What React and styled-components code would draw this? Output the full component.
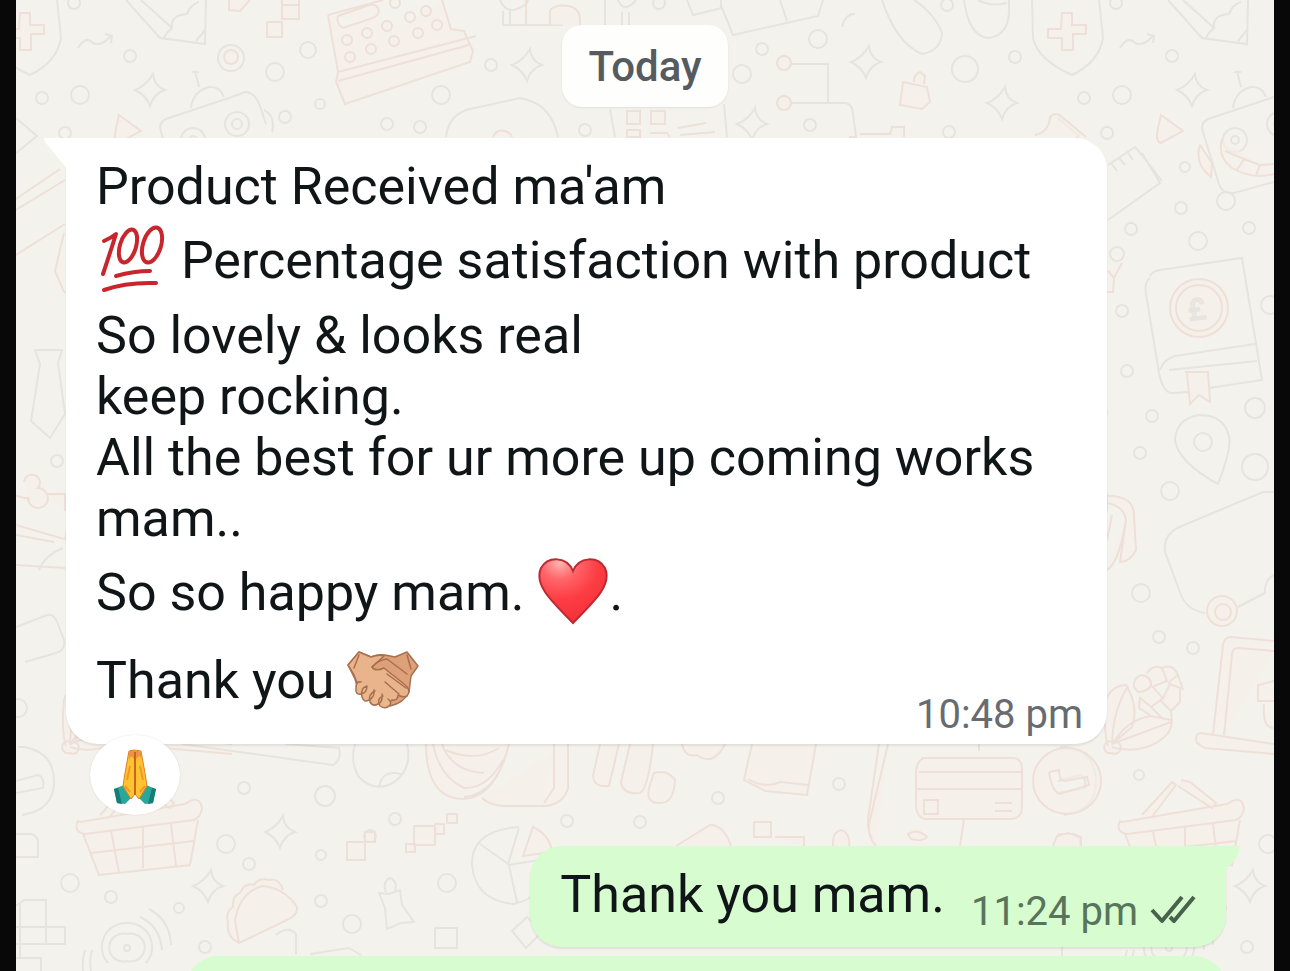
import React from 'react'
import styled, { createGlobalStyle } from 'styled-components'

function App() {
  return (
    <>
      <GlobalStyle />
      <Screen>
        <Wallpaper />
        <Chat>
          <DayChip>Today</DayChip>
          <Incoming>
            <IncomingTail viewBox="0 0 24 32" aria-hidden="true">
              <path d="M0 0H24V32L2 5Q0 2 0 0Z" fill="#fff" />
            </IncomingTail>
            <Line>Product Received ma'am</Line>
            <Line $tall><Hundred /> Percentage satisfaction with product</Line>
            <Line>So lovely &amp; looks real</Line>
            <Line>keep rocking.</Line>
            <Line>All the best for ur more up coming works mam..</Line>
            <Line $tall>So so happy mam. <Heart />.</Line>
            <LastRow>
              <Line $tall>Thank you <Handshake /></Line>
              <Time>10:48 pm</Time>
            </LastRow>
            <Reaction aria-label="Folded hands reaction"><Pray /></Reaction>
          </Incoming>
          <Outgoing>
            <OutgoingTail viewBox="0 0 24 32" aria-hidden="true">
              <path d="M24 0H0V32Q10 32 11 22Q23 12 24 0Z" fill="#d7fccf" />
            </OutgoingTail>
            <Line>Thank you mam.</Line>
            <Meta>
              <Time $sent>11:24 pm</Time>
              <Ticks />
            </Meta>
          </Outgoing>
          <NextMessage />
        </Chat>
      </Screen>
    </>
  )
}

function Hundred() {
  return (
    <Emoji viewBox="0 0 72 72" role="img" aria-label="100">
      <g fill="none" stroke="#c9252d" strokeWidth="4" strokeLinecap="round" strokeLinejoin="round">
        <path d="M8 18Q15 15 20 11Q14 30 7 51" />
        <ellipse cx="32" cy="23" rx="8" ry="17" transform="rotate(17 32 23)" />
        <ellipse cx="56" cy="22" rx="9" ry="18" transform="rotate(17 56 22)" />
        <path d="M20 53Q38 48 54 48" />
        <path d="M8 67Q30 59 60 60" />
      </g>
    </Emoji>
  )
}

function Heart() {
  return (
    <Emoji viewBox="0 0 72 72" role="img" aria-label="Red heart">
      <defs>
        <radialGradient id="heart" cx="30%" cy="5%" r="90%">
          <stop offset="0" stopColor="#ffb6b2" />
          <stop offset="0.3" stopColor="#ff656a" />
          <stop offset="0.65" stopColor="#fc3d43" />
          <stop offset="1" stopColor="#f5323a" />
        </radialGradient>
      </defs>
      <path
        d="M36 16C30 1 11 1 4 13C-3 29 12 44 36 68C60 44 75 29 68 13C61 1 42 1 36 16Z"
        fill="url(#heart)"
        stroke="#bb2932"
        strokeWidth="2"
      />
    </Emoji>
  )
}

function Handshake() {
  return (
    <Emoji viewBox="0 0 72 72" role="img" aria-label="Handshake">
      <g stroke="#a8704f" strokeWidth="1.5" strokeLinejoin="round" strokeLinecap="round">
        <path fill="#dea078" d="M1 22L12 9L24 14Q31 11 38 12L48 14L60 9L71 23L64 33L62 49Q57 60 43 63L30 61L12 50L8 36Z" />
        <path fill="#e9b38b" d="M1 22L12 9L24 14Q32 11 37 13L25 24Q28 29 37 25L57 41Q65 47 60 53Q56 55 51 52Q51 58 45 57Q42 61 37 56L12 45L7 32Z" />
        <path fill="#ebb78d" d="M14 39Q9 38 9 45Q8 52 14 51Q20 50 20 43M20 43Q13 45 15 54Q17 60 22 57Q28 54 27 47M28 48Q21 51 23 59Q26 64 31 61Q36 59 35 51M36 53Q29 56 33 63Q39 67 43 62Q45 59 41 56" />
        <path fill="none" d="M25 24Q31 17 40 16L60 31M40 31L59 45M38 39L52 51M12 12L7 25M60 12L64 26" />
      </g>
    </Emoji>
  )
}

function Pray() {
  return (
    <PrayIcon viewBox="0 0 44 56" role="img" aria-label="Folded hands">
      <path fill="#2ba79a" d="M1 40L11 36L19 48L12 55L4 54ZM43 40L33 36L25 48L32 55L40 54Z" />
      <path fill="#147d77" d="M1 40L5 39L9 55L4 54ZM43 40L39 39L35 55L40 54Z" />
      <path fill="#ffc331" stroke="#dc8124" strokeWidth="1" d="M21 1L16 2L12 24L10 37L18 50L22 45L26 50L34 37L32 24L28 2Z" />
      <path fill="#ee9342" d="M16 2H28V9L26 7L22 11L18 7L16 11Z" />
      <path fill="none" stroke="#c76620" strokeWidth="2" d="M22 3V46" />
      <path fill="none" stroke="#f09a23" strokeWidth="2" d="M17 43L12 37M27 43L32 37M17 17L14 31M27 17L30 31" />
    </PrayIcon>
  )
}

function Ticks() {
  return (
    <TickIcon viewBox="0 0 46 30" role="img" aria-label="Delivered">
      <path d="M2 15L12 26L32 2M20 22L24 26L44 2" fill="none" stroke="#48624b" strokeWidth="4" strokeLinejoin="round" />
    </TickIcon>
  )
}

const dots = [
  [1172, 56, 6], [1084, 98, 6], [1122, 95, 9], [1107, 133, 6], [1185, 167, 5],
  [1181, 208, 6], [1131, 229, 6], [1198, 241, 9], [1249, 228, 6], [1122, 311, 6],
  [1270, 305, 9], [1127, 371, 6], [1255, 408, 10], [1152, 416, 6], [1140, 453, 6],
  [1255, 467, 13], [1170, 491, 9], [1141, 593, 9], [1159, 637, 6], [1193, 648, 6],
  [1139, 775, 5], [1268, 844, 9], [1247, 947, 6], [1112, 883, 9], [1153, 897, 6],
  [1221, 908, 5], [1060, 708, 9], [1099, 461, 6], [1116, 3, 6]
]

const midDots = [
  [308, 50, 8], [275, 72, 9], [320, 104, 5], [387, 124, 6], [420, 127, 6],
  [285, 117, 6], [491, 65, 6], [441, 95, 9], [742, 74, 9], [585, 130, 6],
  [762, 49, 6], [818, 39, 9], [659, 3, 6], [810, 125, 6], [947, 5, 6],
  [965, 69, 13], [1015, 57, 6], [949, 132, 6], [244, 788, 6], [325, 796, 10],
  [395, 819, 6], [249, 864, 6], [321, 855, 5], [321, 901, 6], [352, 924, 9],
  [447, 883, 9], [567, 821, 6], [640, 822, 6], [718, 798, 6], [839, 784, 6],
  [370, 836, 6]
]

const sparkles = [[1192, 90], [1250, 886]]
const midSparkles = [[527, 65], [752, 124], [866, 62], [280, 832], [1002, 103]]

const registerKeys = [
  [347, 40], [367, 33], [387, 26], [410, 17], [350, 57], [371, 49],
  [394, 41], [418, 33], [395, 3], [426, 11], [437, 25]
]

function Sparkle({ x, y }) {
  return <path d={`M${x + 3} ${y - 16}Q${x + 4} ${y - 4} ${x + 15} ${y}Q${x + 4} ${y + 3} ${x} ${y + 16}Q${x - 4} ${y + 5} ${x - 15} ${y}Q${x - 4} ${y - 4} ${x + 3} ${y - 16}Z`} />
}

// drawings that come back once per pattern tile
function TileDoodles() {
  return (
    <>
      {dots.map(([x, y, r]) => <circle key={`${x}-${y}`} cx={x} cy={y} r={r} />)}
      {sparkles.map(([x, y]) => <Sparkle key={x} x={x} y={y} />)}
      <path d="M1032 0L1033 38Q1038 60 1072 75Q1099 62 1103 38L1099 0" />
      <Warm d="M1062 13H1072V25H1086V34H1073V50H1062V38H1048V29H1061Z" />
      <path d="M1120 48Q1128 35 1135 43Q1143 47 1153 36M1147 34L1154 36L1153 43" />
      <path d="M1168 0L1202 38L1247 44L1248 0M1183 0L1214 28Q1207 34 1206 39M1214 28Q1212 15 1229 14Q1232 5 1241 2M1247 30L1238 41" />
      <Warm d="M1161 115L1183 131L1161 143Q1155 142 1158 128Z" />
      <path d="M1233 108Q1235 91 1251 87Q1262 86 1266 97M1241 87L1237 71M1234 72H1241M1274 97L1208 119Q1200 123 1203 132L1219 184Q1222 194 1234 193L1274 182" />
      <circle cx="1235" cy="140" r="12" /><circle cx="1235" cy="140" r="4" />
      <Warm d="M1222 139Q1217 157 1232 168Q1253 180 1274 174M1225 151L1244 159L1237 170M1244 159L1260 165L1256 175M1260 165L1274 164M1200 145Q1194 164 1211 177L1212 163Z" />
      <circle cx="1226" cy="201" r="9" />
      <path d="M1274 97L1287 92Q1297 92 1302 106L1308 124M1306 110Q1318 116 1314 132" />
      <circle cx="1279" cy="124" r="12" /><circle cx="1279" cy="124" r="5" />
      <path d="M1058 118L1079 136L1058 153M1162 181L1141 154L1135 147L1108 165M1142 153L1160 183L1108 220M1127 151L1133 160M1119 158L1125 165M1111 163L1117 171" />
      <Warm d="M1058 199L1102 169M1058 210L1107 180M1058 255L1107 224M1106 233L1097 271L1106 292" />
      <circle cx="1117" cy="254" r="7" /><Warm d="M1122 263L1114 278L1108 271M1114 278L1113 292H1106" />
      <path d="M1150 278Q1144 282 1146 294L1158 367Q1162 395 1174 393L1189 392M1150 276Q1153 271 1160 270L1242 258L1262 380L1209 388M1160 370Q1164 359 1175 356L1255 344M1169 370L1257 361" />
      <Warm d="M1185 372H1208L1210 402L1199 395L1190 404L1187 373" />
      <Warm d="M1199 279A29 29 0 1 0 1199 337A29 29 0 1 0 1199 279M1199 285A23 23 0 1 0 1199 331A23 23 0 1 0 1199 285" />
      <text x="1188" y="319" fontSize="29" transform="rotate(-8 1199 308)">£</text>
      <path d="M1218 484Q1178 462 1175 440Q1176 419 1199 415Q1224 415 1229 436Q1232 448 1218 484Z" /><circle cx="1203" cy="442" r="9" />
      <path d="M1274 492L1263 492L1177 528Q1163 536 1165 552L1181 595Q1187 610 1205 613M1238 607L1265 593M1265 593Q1264 580 1274 575" />
      <Warm d="M1222 596A15 15 0 1 0 1222 626A15 15 0 1 0 1222 596M1223 604A8 8 0 1 0 1223 620A8 8 0 1 0 1223 604" />
      <Warm d="M1107 496Q1134 495 1134 516L1136 550Q1130 562 1120 562L1126 520Q1124 506 1107 503M1107 570Q1119 563 1126 520M1107 540L1112 515" />
      <path d="M1077 350H1104L1100 363L1107 414L1092 438L1073 421L1082 364Z" />
      <Warm d="M1066 482A8 8 0 1 1 1080 488A10 10 0 1 1 1070 497M1058 496L1072 499M1088 494H1107V511M1058 525L1106 539M1058 535L1096 542M1058 565L1107 568" />
      <path d="M1058 627L1089 615Q1096 613 1100 624L1106 640Q1108 650 1098 653L1067 662M1081 570Q1087 555 1105 548" />
      <path d="M1060 747H1066Q1096 752 1096 782Q1096 810 1064 815M1058 781L1080 775Q1087 778 1085 788L1058 793M1058 834H1074Q1081 837 1080 845V857H1058" />
      <Warm d="M1108 746Q1103 730 1106 700Q1111 686 1126 685Q1139 706 1132 727L1112 744M1112 744Q1113 710 1128 686M1112 745Q1127 719 1151 716L1171 720Q1174 735 1150 746Q1130 753 1112 747M1112 744L1171 722M1113 742A6 6 0 1 0 1112 753A6 6 0 1 0 1113 742" />
      <Warm d="M1134 687Q1133 677 1142 675Q1152 677 1151 686Q1146 692 1138 692ZM1147 673Q1153 664 1162 668L1167 681L1154 686M1162 668Q1173 663 1178 675L1168 683M1152 686L1163 698L1151 707L1139 697M1163 698L1170 684L1180 688V702L1171 711L1160 700M1151 707L1163 719M1140 697L1139 708L1150 715M1178 675L1183 690M1171 711L1172 723" />
      <Warm d="M1274 641L1231 637Q1224 637 1223 645L1213 734M1274 651L1238 648Q1232 648 1232 655L1224 735M1274 744L1201 733Q1194 734 1197 743L1205 748L1274 754M1274 681L1258 685V701H1274M1264 704Q1262 727 1273 728" />
      <Warm d="M1122 822L1227 804Q1242 794 1244 808Q1243 817 1236 820L1127 834Q1115 832 1120 821ZM1142 815L1172 782L1176 785L1151 818M1181 780L1190 782L1216 803L1212 808L1178 786M1125 834L1141 875L1232 865L1240 820M1153 831L1161 873M1185 826V868M1213 824L1218 866M1133 853L1236 841" />
      <path d="M1058 906L1066 900H1088V927H1107V944H1058M1062 904V957M1058 927H1088V944M1058 958H1083V971" />
      <path d="M1125 971Q1124 960 1127 950M1133 971Q1131 960 1134 950M1169 923A24 24 0 0 0 1150 963M1169 923A24 24 0 0 1 1188 963M1169 934A14 14 0 1 0 1169 961A14 14 0 1 0 1169 934M1182 917Q1202 926 1204 950M1191 909Q1212 920 1213 945" />
      <circle cx="1169" cy="948" r="3" />
    </>
  )
}

function Wallpaper() {
  return (
    <Pattern viewBox="0 0 1258 971" preserveAspectRatio="xMidYMin slice" aria-hidden="true">
      <g transform="translate(-16 0)">
        <TileDoodles />
        <g transform="translate(-1042 0)"><TileDoodles /></g>
        {midDots.map(([x, y, r]) => <circle key={`${x}-${y}`} cx={x} cy={y} r={r} />)}
        {midSparkles.map(([x, y]) => <Sparkle key={x} x={x} y={y} />)}
        <circle cx="231" cy="58" r="13" /><Warm d="M224 57A7 7 0 1 0 238 57A7 7 0 1 0 224 57" />
        <Warm d="M229 0V10L240 11L250 0M282 0V19H299V0M267 22H282V37H267ZM282 5H299" />
        {/* cash register */}
        <Warm d="M328 15L383 0M328 15L338 72L476 36M338 81L469 45M338 72L336 82L345 104L470 62L473 51L464 31L451 29L442 0M338 16L369 5Q378 3 379 12Q377 17 370 19L343 28Q336 24 338 16Z" />
        {registerKeys.map(([x, y]) => <Key key={`${x}-${y}`} cx={x} cy={y} r="5" />)}
        <path d="M500 0Q505 11 514 10Q527 6 528 0M503 11V25M510 11V25M503 25H563M605 0V25M618 0Q624 14 636 0M622 12V25M629 12V25" />
        <Warm d="M526 0V25M550 25V10Q556 4 568 6Q580 8 580 20V25" />
        <path d="M687 0L693 15L722 8L733 35L818 16L823 0M721 8V0M780 0L787 21M842 27Q845 14 855 14M446 137Q448 117 466 110L520 98Q551 103 558 137M610 109L615 137M724 104L727 137" />
        <Warm d="M493 137Q496 129 505 131Q511 133 512 137M627 111H640V124H627ZM651 111H665V124H651ZM627 130H640V137H627ZM650 133H667L670 137M678 128L706 123M680 135L715 132" />
        <Warm d="M784 56A7 7 0 1 0 784 70A7 7 0 1 0 784 56M784 96A7 7 0 1 0 784 110A7 7 0 1 0 784 96" />
        <path d="M791 64H828V102M792 103H846Q853 105 853 114L856 137H849" />
        <path d="M882 0Q896 43 922 54Q941 51 942 33Q935 14 914 0M964 0Q969 37 989 38Q1009 35 1009 10V0M978 0Q991 7 1007 3" />
        <Warm d="M903 82L927 87L930 102L922 109L900 105ZM914 82Q913 75 920 72L925 76L924 84M860 134H890L892 127H904V137M1035 135Q1049 132 1050 117Q1055 111 1062 117L1086 137" />
        <path d="M355 744Q350 760 358 776Q373 793 393 783Q413 769 407 744M379 787Q382 769 401 774M182 744L333 765Q342 760 339 748L286 744" />
        <Warm d="M426 744Q426 799 464 799Q496 797 509 744M433 744Q439 776 464 788Q487 789 503 760M442 744Q451 771 484 773M446 750Q475 763 499 748M482 798Q490 806 506 806H547Q564 803 568 788V744M554 744V788L544 803M503 763Q491 794 464 797" />
        <Warm d="M600 744L593 776Q594 788 609 786L619 744M630 744L621 782Q623 795 640 793Q648 790 653 744M654 773Q668 769 675 780Q674 804 659 803Q644 803 650 785Z" />
        <Warm d="M682 744Q685 758 697 755Q714 767 725 744M752 744L744 780L765 791L807 795L816 744M748 779Q764 789 781 782L808 785M888 744L870 820Q866 835 876 846M879 744L869 812Q866 830 872 838" />
        <Warm d="M414 826H435V845H414ZM435 824H444V834H435ZM447 814H457V823H447ZM406 844H415V852H406Z" />
        <Warm d="M347 842H365V860H347ZM365 832H375V842H365Z" />
        <path d="M519 827Q471 830 472 865Q475 900 513 904Q544 898 548 866M480 844L508 864L519 828M508 865L552 858M509 866L517 902" />
        <Warm d="M533 827Q550 835 552 852L523 856ZM676 846L710 825Q724 825 731 846M754 822H771V837H754ZM775 837H804V846M833 846Q832 831 842 830Q851 835 849 846" />
        <path d="M379 893L389 894L400 890L402 905L414 922L401 923L387 929L385 908ZM386 892Q382 882 390 878Q398 881 395 891M435 928H457V948H435ZM512 931L527 917L542 932L526 948Z" />
        <Warm d="M921 758H1013Q1022 758 1022 769V807Q1022 819 1010 819H925Q916 817 916 805V770Q918 758 926 758M919 772H1021M917 789H1021M924 800H938V814H924ZM995 803H1012M995 811H1012M908 834Q918 828 927 837Q923 842 911 839ZM964 819L960 846M979 744V751" />
        <Warm d="M1067 748A34 33 0 1 0 1067 814A34 33 0 1 0 1067 748M1049 772L1059 770Q1059 779 1064 781L1087 777L1089 785L1060 794Q1052 792 1049 772M1053 846L1057 836L1068 833L1081 837V846" />
        {/* taco */}
        <Warm d="M239 943L235 921Q239 893 262 886Q285 888 297 907Q298 914 289 919ZM239 943Q226 937 228 922Q225 912 233 907Q232 896 240 893Q245 882 254 885Q259 877 269 880Q279 877 283 890" />
        <path d="M276 935Q288 925 296 934V954M310 954L349 948L361 955" />
      </g>
    </Pattern>
  )
}

const GlobalStyle = createGlobalStyle`
  * {
    box-sizing: border-box;
  }
  body {
    margin: 0;
    background: #080808;
    font-family: Roboto, "Noto Sans", sans-serif;
  }
`

const Screen = styled.div`
  position: relative;
  height: 100vh;
  margin: 0 16px;
  overflow: hidden;
  background: #f4f2ed;
`

const Pattern = styled.svg`
  position: absolute;
  top: 0;
  left: 0;
  width: 100%;
  height: 100%;
  fill: none;
  stroke: #e7e4df;
  stroke-width: 2;
`

const Warm = styled.path`
  stroke: #eee0d8;
  fill: #f7efe8;
  fill-opacity: 0.6;
`

const Key = styled.circle`
  stroke: #eddfd8;
`

const Chat = styled.main`
  position: relative;
  display: flex;
  flex-direction: column;
  padding: 25px 48px 0;
`

const DayChip = styled.div`
  align-self: center;
  height: 82px;
  padding: 0 26px;
  border-radius: 20px;
  background: #fefefd;
  box-shadow: 0 1px 2px rgba(0, 0, 0, 0.08);
  color: #555b5f;
  font-size: 42px;
  font-weight: 500;
  line-height: 84px;
`

const Bubble = styled.section`
  position: relative;
  color: #101518;
`

const Incoming = styled(Bubble)`
  width: 100%;
  max-width: 1041px;
  margin-top: 31px;
  margin-left: 2px;
  padding: 18px 24px 5px 30px;
  border-radius: 0 32px 32px 32px;
  background: #fff;
  box-shadow: 0 2px 2px rgba(0, 0, 0, 0.08);
`

const Outgoing = styled(Bubble)`
  align-self: flex-end;
  display: flex;
  gap: 26px;
  margin-top: 102px;
  padding: 18px 30px 22px;
  border-radius: 32px 0 32px 32px;
  background: #d7fccf;
  box-shadow: 0 2px 2px rgba(0, 0, 0, 0.08);
`

const NextMessage = styled.section`
  align-self: flex-end;
  width: 1040px;
  max-width: 100%;
  height: 100px;
  margin-top: 9px;
  border-radius: 32px;
  background: #d7fccf;
`

const IncomingTail = styled.svg`
  position: absolute;
  top: 0;
  left: -22px;
  width: 24px;
  height: 32px;
`

const OutgoingTail = styled.svg`
  position: absolute;
  top: 0;
  right: -14px;
  width: 24px;
  height: 32px;
`

const Line = styled.p`
  margin: 0;
  font-size: 52px;
  line-height: ${props => (props.$tall ? '88px' : '61px')};
`

const LastRow = styled.div`
  display: flex;
  justify-content: space-between;
  align-items: flex-end;

  ${Line} {
    margin-bottom: 14px;
  }
`

const Time = styled.time`
  color: ${props => (props.$sent ? '#58745b' : '#686b6f')};
  font-size: 40px;
  line-height: 48px;
  white-space: nowrap;
`

const Meta = styled.div`
  display: flex;
  align-items: center;
  align-self: flex-end;
  gap: 12px;
  height: 26px;
`

const Emoji = styled.svg`
  width: 72px;
  height: 72px;
  vertical-align: -17px;
`

const Reaction = styled.button`
  position: absolute;
  bottom: -71px;
  left: 24px;
  display: flex;
  align-items: center;
  justify-content: center;
  width: 90px;
  height: 80px;
  padding: 4px 0 0;
  border: none;
  border-radius: 50%;
  background: #fff;
  box-shadow: 0 0 2px rgba(0, 0, 0, 0.12);
`

const PrayIcon = styled.svg`
  width: 44px;
  height: 56px;
`

const TickIcon = styled.svg`
  width: 46px;
  height: 30px;
  margin-bottom: 4px;
`

export default App
